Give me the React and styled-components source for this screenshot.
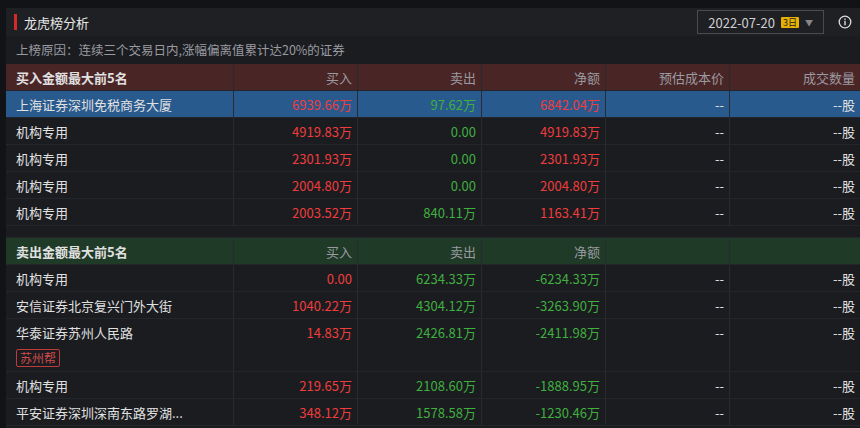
import React from "react";
import styled, { createGlobalStyle } from "styled-components";

const G = createGlobalStyle`
  body{margin:0;background:#121316;font-family:"Microsoft YaHei","Noto Sans CJK SC",sans-serif;}
`;
const Page = styled.div`padding:8px 0 0 6px;width:854px;height:420px;overflow:hidden;background:#121316;`;
const Panel = styled.div`background:#1b1c20;height:100%;`;
const TitleBar = styled.div`height:28px;display:flex;align-items:center;background:#1f2024;padding:0 8px 0 8px;`;
const Mark = styled.span`width:3px;height:16px;background:#d42a2a;margin-right:7px;`;
const Title = styled.span`color:#e8e8e8;font-size:13px;flex:1;`;
const DateBox = styled.div`display:flex;align-items:center;gap:6px;border:1px solid #4a4b50;height:22px;padding:0 10px;color:#d0d0d0;font-size:13px;margin-right:14px;`;
const Badge = styled.span`background:#e8b000;color:#222;font-size:9px;padding:0 2px;line-height:11px;border-radius:1px;`;
const Reason = styled.div`height:28px;line-height:28px;padding-left:10px;color:#9a9ba0;font-size:12.5px;`;
const Row = styled.div`display:grid;grid-template-columns:228px 124px 124px 124px 124px 130px;height:${p=>p.h||27}px;background:${p=>p.bg||"transparent"};border-bottom:1px solid #25262b;box-sizing:border-box;`;
const Cell = styled.div`font-size:13px;padding:0 ${p=>p.left?"0 0 10px":"5px 0 0"};display:flex;align-items:center;justify-content:${p=>p.left?"flex-start":"flex-end"};color:${p=>p.c||"#e0e0e0"};border-right:${p=>p.last?"none":"1px solid #2a2b30"};font-weight:${p=>p.b?"bold":"normal"};white-space:nowrap;padding-left:${p=>p.left?"10px":"0"};padding-right:${p=>p.left?"0":"5px"};`;
const Gap = styled.div`height:11px;border-bottom:1px solid #25262b;`;
const Tag = styled.span`border:1px solid #c0393b;color:#d04a4a;font-size:12px;padding:0 3px;line-height:16px;border-radius:2px;`;

const R="#f03c3c",GR="#3fb03f",H="#9a9ba0";
const buy=[["上海证券深圳免税商务大厦","6939.66万","97.62万","6842.04万",true],["机构专用","4919.83万","0.00","4919.83万"],["机构专用","2301.93万","0.00","2301.93万"],["机构专用","2004.80万","0.00","2004.80万"],["机构专用","2003.52万","840.11万","1163.41万"]];
const sell=[["机构专用","0.00","6234.33万","-6234.33万"],["安信证券北京复兴门外大街","1040.22万","4304.12万","-3263.90万"],["华泰证券苏州人民路","14.83万","2426.81万","-2411.98万",true],["机构专用","219.65万","2108.60万","-1888.95万"],["平安证券深圳深南东路罗湖...","348.12万","1578.58万","-1230.46万"]];

export default function App(){
  return <Page><G/><Panel>
    <TitleBar><Mark/><Title>龙虎榜分析</Title>
      <DateBox>2022-07-20 <Badge>3日</Badge><span style={{fontSize:8,color:"#888"}}>▼</span></DateBox>
      <svg width="14" height="14" viewBox="0 0 14 14"><circle cx="7" cy="7" r="5.8" fill="none" stroke="#ddd" strokeWidth="1.3"/><rect x="6.3" y="3.5" width="1.4" height="1.4" fill="#ddd"/><rect x="6.3" y="5.8" width="1.4" height="4.5" fill="#ddd"/></svg>
    </TitleBar>
    <Reason>上榜原因：连续三个交易日内,涨幅偏离值累计达20%的证券</Reason>
    <Row bg="#4a2526"><Cell left b>买入金额最大前5名</Cell><Cell c={H}>买入</Cell><Cell c={H}>卖出</Cell><Cell c={H}>净额</Cell><Cell c={H}>预估成本价</Cell><Cell c={H} last>成交数量</Cell></Row>
    {buy.map((r,i)=><Row key={i} bg={r[4]?"#295a8e":undefined}><Cell left>{r[0]}</Cell><Cell c={R}>{r[1]}</Cell><Cell c={GR}>{r[2]}</Cell><Cell c={R}>{r[3]}</Cell><Cell>--</Cell><Cell last>--股</Cell></Row>)}
    <Gap/>
    <Row bg="#1f3a27"><Cell left b>卖出金额最大前5名</Cell><Cell c={H}>买入</Cell><Cell c={H}>卖出</Cell><Cell c={H}>净额</Cell><Cell/><Cell last/></Row>
    {sell.map((r,i)=><React.Fragment key={i}>
      <Row h={r[4]?26:27} style={r[4]?{borderBottom:"none"}:undefined}><Cell left>{r[0]}</Cell><Cell c={R}>{r[1]}</Cell><Cell c={GR}>{r[2]}</Cell><Cell c={GR}>{r[3]}</Cell><Cell>--</Cell><Cell last>--股</Cell></Row>
      {r[4]&&<Row h={27}><Cell left><Tag>苏州帮</Tag></Cell><Cell/><Cell/><Cell/><Cell/><Cell last/></Row>}
    </React.Fragment>)}
  </Panel></Page>;
}
